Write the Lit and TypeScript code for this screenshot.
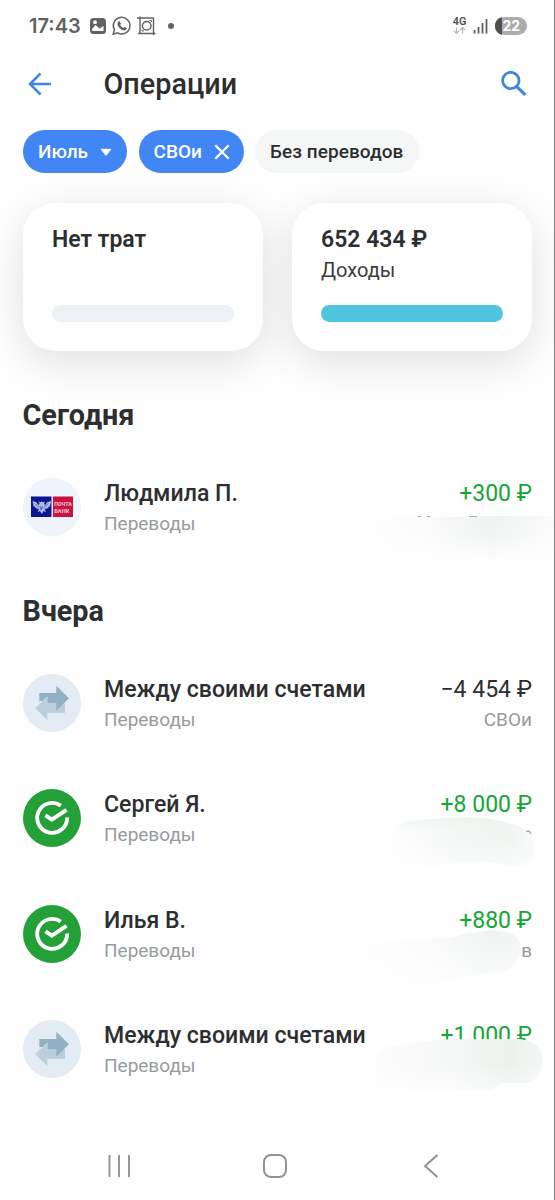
import { LitElement, html, svg, css, nothing } from "lit";
import { customElement, property } from "lit/decorators.js";

type Kind = "post" | "swap" | "sber";

interface Operation {
  kind: Kind;
  name: string;
  amount: string;
  income: boolean;
  account: string;
  smudge?: number;
}

const today: Operation[] = [
  { kind: "post", name: "Людмила П.", amount: "+300 ₽", income: true, account: "", smudge: 1 },
];

const yesterday: Operation[] = [
  { kind: "swap", name: "Между своими счетами", amount: "−4 454 ₽", income: false, account: "СВОи" },
  { kind: "sber", name: "Сергей Я.", amount: "+8 000 ₽", income: true, account: "", smudge: 2 },
  { kind: "sber", name: "Илья В.", amount: "+880 ₽", income: true, account: "в", smudge: 3 },
  { kind: "swap", name: "Между своими счетами", amount: "+1 000 ₽", income: true, account: "", smudge: 4 },
];

const icons = {
  post: svg`
    <circle cx="29" cy="29" r="29" fill="#eff3fc"/>
    <rect x="8" y="18.500" width="20.500" height="20.500" fill="#0d1590"/>
    <rect x="30" y="18.500" width="20" height="20.500" fill="#c8123f"/>
    <path d="M9.500 23l4 1.200 2 3 1-2-1-2 2 1 1.300-.8 1.300.8 2-1-1 2 1 2 2-3 4-1.200-1 5-3 2.500-2.500.500 1.500 3-2.500-1-1.800 3-1.800-3-2.500 1 1.500-3-2.500-.500-3-2.500z" fill="#a9bce6"/>
    <path d="M17 28l1.300 4 1.300-4M12 25.500l4 4M25 25.500l-4 4" fill="none" stroke="#0d1590" stroke-width=".5"/>
    <text x="31.300" y="27.800" font-size="6" font-weight="900" fill="#f7bccb" textLength="17.500" lengthAdjust="spacingAndGlyphs">ПОЧТА</text>
    <text x="31.300" y="34.500" font-size="6" font-weight="900" fill="#f7bccb" textLength="15" lengthAdjust="spacingAndGlyphs">БАНК</text>`,
  swap: svg`
    <circle cx="29" cy="29" r="29" fill="#e3ebf4"/>
    <path d="M23 29.300H42V38.800H23z" fill="#bccedb"/>
    <path d="M16.300 19H33.300V11.800L46 24.300 33.300 36.800V29.300H16.300z" fill="#92b0c4"/>
    <path d="M16.300 27V31H24.300V22.500L19.500 27z" fill="#e3ebf4"/>
    <path d="M12.300 34.300L24.300 22.500V45.800z" fill="#bccedb"/>`,
  sber: svg`
    <circle cx="29" cy="29" r="29" fill="#24a038"/>
    <path d="M37.800 16.600A15 15 0 1 0 44.200 28.500" fill="none" stroke="#fff" stroke-width="3.800"/>
    <path d="M22.500 26.300l6.300 4.300L43.500 20.900" fill="none" stroke="#fff" stroke-width="4"/>`,
};

/* Blurred strokes that hide account names; coordinates are relative to the row. */
const smudges: Record<number, unknown> = {
  1: svg`
    <defs>
      <linearGradient id="a" x1="0" x2="1"><stop offset="0" stop-color="#fefefe"/><stop offset=".35" stop-color="#f9faf9"/><stop offset=".65" stop-color="#eef2f0"/><stop offset="1" stop-color="#fafbfa"/></linearGradient>
      <linearGradient id="b" x1="0" x2="0" y1="0" y2="1"><stop offset="0" stop-color="#fefefe" stop-opacity="0"/><stop offset=".4" stop-color="#fefefe" stop-opacity=".2"/><stop offset="1" stop-color="#fefefe"/></linearGradient>
    </defs>
    <path d="M368 39H450L480 38H554V84H368z" fill="url(#a)"/>
    <path d="M366 37H554V84.500H366z" fill="url(#b)"/>
    <path d="M418 38.500h2.500M427 38.500h3M469 38.500h8" stroke="#a9adaf" stroke-width="1"/>`,
  2: svg`
    <defs>
      <linearGradient id="a" x1="0" x2="1"><stop offset="0" stop-color="#fdfdfd"/><stop offset=".5" stop-color="#f3f6f4"/><stop offset=".85" stop-color="#f1f5f2"/><stop offset="1" stop-color="#f8faf8"/></linearGradient>
      <linearGradient id="b" x1="0" x2="0" y1="0" y2="1"><stop offset="0" stop-color="#e2f1e5" stop-opacity=".5"/><stop offset=".4" stop-color="#fff" stop-opacity="0"/><stop offset="1" stop-color="#fff" stop-opacity=".6"/></linearGradient>
    </defs>
    <path d="M392 54Q390 34 412 32Q450 27 485 29Q518 34 530 44Q534 48 534 60Q533 74 520 78Q508 76 490 73Q470 71 450 74Q430 80 405 77Q392 73 392 54z" fill="url(#a)"/>
    <path d="M392 54Q390 34 412 32Q450 27 485 29Q518 34 530 44Q534 48 534 60Q533 74 520 78Q508 76 490 73Q470 71 450 74Q430 80 405 77Q392 73 392 54z" fill="url(#b)"/>
    <path d="M526 42.500q4-1.500 4.500 2.500" fill="none" stroke="#9da1a3" stroke-width="1.300"/>`,
  3: svg`
    <defs>
      <linearGradient id="a" x1="0" x2="1"><stop offset="0" stop-color="#fefefe"/><stop offset=".5" stop-color="#f9faf9"/><stop offset=".85" stop-color="#eff4f1"/><stop offset="1" stop-color="#f2f6f3"/></linearGradient>
      <linearGradient id="b" x1=".45" x2=".55" y1=".1" y2="1"><stop offset="0" stop-color="#fff" stop-opacity="0"/><stop offset="1" stop-color="#fff" stop-opacity=".7"/></linearGradient>
    </defs>
    <path d="M351 58Q352 40 375 37Q430 38 465 29Q495 22 507 27Q520 30 521 43Q520 59 507 65Q460 73 430 77Q390 84 365 79Q351 75 351 58z" fill="url(#a)"/>
    <path d="M351 58Q352 40 375 37Q430 38 465 29Q495 22 507 27Q520 30 521 43Q520 59 507 65Q460 73 430 77Q390 84 365 79Q351 75 351 58z" fill="url(#b)"/>`,
  4: svg`
    <defs>
      <linearGradient id="a" x1="0" x2="1"><stop offset="0" stop-color="#fbfbfb"/><stop offset=".5" stop-color="#f4f6f5"/><stop offset=".8" stop-color="#e9f1eb"/><stop offset="1" stop-color="#f3f6f4"/></linearGradient>
      <linearGradient id="b" x1="0" x2="0" y1="0" y2="1"><stop offset="0" stop-color="#fff" stop-opacity=".1"/><stop offset=".5" stop-color="#fff" stop-opacity=".1"/><stop offset="1" stop-color="#fff" stop-opacity=".6"/></linearGradient>
    </defs>
    <path d="M375 46Q375 28 392 26L440 19.500Q480 19 520 19Q543 22 543 42Q542 61 525 63H502Q494 71 480 70H388Q375 68 375 46z" fill="url(#a)"/>
    <path d="M375 46Q375 28 392 26L440 19.500Q480 19 520 19Q543 22 543 42Q542 61 525 63H502Q494 71 480 70H388Q375 68 375 46z" fill="url(#b)"/>`,
};

@customElement("operation-row")
class OperationRow extends LitElement {
  @property({ attribute: false }) op!: Operation;

  static styles = css`
    :host { display: block; position: relative; height: 115.400px; }
    .row { display: flex; padding: 0 23px; }
    .icon { width: 58px; height: 58px; flex: none; margin-right: 23px; }
    .text, .side { padding-top: 1px; white-space: nowrap; }
    .text { flex: 1; }
    .side { text-align: right; }
    .name { font-size: 23.100px; line-height: 30px; font-weight: 500; color: #2d2e30; }
    .amount { font-size: 23px; line-height: 30px; color: #2d2e30; }
    .income { color: #16a637; }
    .sub { font-size: 19px; line-height: 30px; color: #969b9f; }
    .smudge { position: absolute; left: 0; top: 0; width: 555px; height: 90px; }
  `;

  render() {
    const o = this.op;
    return html`
      <div class="row">
        <svg class="icon" viewBox="0 0 58 58">${icons[o.kind]}</svg>
        <div class="text">
          <div class="name">${o.name}</div>
          <div class="sub">Переводы</div>
        </div>
        <div class="side">
          <div class="amount ${o.income ? "income" : ""}">${o.amount}</div>
          <div class="sub">${o.account}</div>
        </div>
      </div>
      ${o.smudge ? html`<svg class="smudge" viewBox="0 0 555 90">${smudges[o.smudge]}</svg>` : nothing}
    `;
  }
}

@customElement("app-root")
class AppRoot extends LitElement {
  static styles = css`
    :host {
      display: block; box-sizing: border-box; width: 555px; height: 1200px; overflow: hidden;
      background: #fefefe; border-right: 1px solid #828282;
      font-family: Roboto, "Liberation Sans", sans-serif; color: #2d2e30;
    }
    .screen { display: flex; flex-direction: column; width: 555px; height: 1200px; }
    svg { display: block; flex: none; }
    .status { display: flex; height: 52px; align-items: center; padding: 0 27px 0 29px; color: #626262; }
    .time { font-family: Inter, Roboto, sans-serif; font-size: 20px; font-weight: 600; width: 58.500px; line-height: 52px; white-space: nowrap; }
    .grow { flex: 1; }
    .head { display: flex; height: 64px; align-items: center; padding: 0 28px 0 27px; }
    .title { flex: 1; margin: 0 0 0 51.500px; font-size: 28.800px; font-weight: 500; line-height: 64px; }
    .chips { display: flex; gap: 11.500px; padding: 14px 23px 0; }
    .chip { box-sizing: border-box; display: flex; align-items: center; height: 43px; border-radius: 22px; padding: 0 15px; font-size: 19px; font-weight: 500; white-space: nowrap; background: #f5f7f7; }
    .on { background: #4285f4; color: #fff; justify-content: space-between; }
    .month { width: 104px; }
    .tag { width: 105px; padding-right: 14px; }
    .plain { width: 164px; letter-spacing: 0.060px; }
    .cards { display: flex; gap: 29px; padding: 30px 23px 0; }
    .card { box-sizing: border-box; width: 240px; height: 148px; border-radius: 32px; background: #fff; padding: 22px 29px 29px; display: flex; flex-direction: column; box-shadow: 0 11px 44px rgba(0, 0, 0, 0.12); }
    .sum { font-size: 23px; line-height: 30px; font-weight: 600; white-space: nowrap; }
    .label { font-size: 20px; line-height: 30px; color: #3b3c3e; }
    .bar { height: 17.500px; border-radius: 9px; margin-top: auto; background: #edf1f3; }
    .full { background: #4fc4df; }
    .day { margin: 0; font-size: 28.800px; font-weight: 700; line-height: 40px; padding: 44px 22.500px 43px; }
    .second { padding: 55px 22.500px 43px; margin-top: -57.400px; }
    .nav { display: flex; justify-content: space-between; align-items: center; padding: 0 116px 0 107px; margin-top: 16.400px; height: 28px; }
    .home { margin-right: 5px; }
  `;

  render() {
    return html`
      <div class="screen">
        <div class="status">
          <span class="time">17:43</span>
          <svg width="90" height="22" viewBox="0 0 90 22">
            <rect x="2" y="3" width="16" height="16" rx="3.500" fill="#626262"/>
            <path d="M4 14l3.500-4 4 3.500 4-2.500v5h-11z" fill="#fff"/><circle cx="7" cy="7.200" r="1.900" fill="#fff"/>
            <path d="M25.200 19.200l1.200-4.500a8.300 8.300 0 1 1 3.200 3.200z" fill="none" stroke="#626262" stroke-width="1.500"/>
            <path d="M30.300 6.500l1.500-.3 1.200 2.700-.9 1.200q1.200 2.100 3.200 3l1.200-1.200 2.400 1.200q0 2-2.100 2.400-3.400 0-6-3.300-2.200-3-.5-5.700z" fill="#626262"/>
            <path d="M49 3h16.500M52 1.500V19M50 18.500h17.500M65.500 3v17" fill="none" stroke="#626262" stroke-width="1.400"/>
            <circle cx="58.700" cy="10.800" r="4.300" fill="none" stroke="#626262" stroke-width="1.500"/><path d="M61.500 5.500h2V7M54 14.500V16h2" fill="none" stroke="#626262"/>
            <circle cx="83" cy="11" r="3" fill="#626262"/>
          </svg>
          <span class="grow"></span>
          <svg width="76" height="22" viewBox="0 0 76 22">
            <text x=".8" y="10" font-size="10.500" font-weight="600" fill="#4d4d4d" textLength="13.500" lengthAdjust="spacingAndGlyphs">4G</text>
            <path d="M4.500 12.500v6M2 16l2.500 2.500L7 16M10.500 18.500v-6M8 15l2.500-2.500L13 15" fill="none" stroke="#b5b5b5" stroke-width="1.200"/>
            <path d="M22.500 15v3.500M26.500 12v6.500M30.500 8v10.500M34.500 4v14.500" stroke="#5f5f5f" stroke-width="1.800"/>
            <rect x="43" y="2" width="32" height="18" rx="9" fill="#adadad"/>
            <path d="M50 2.200A9 9 0 0 0 50 19.800z" fill="#4f4f4f"/>
            <text x="50.500" y="16" font-family="Inter, Roboto, sans-serif" font-size="14" font-weight="700" fill="#fff" textLength="17.500" lengthAdjust="spacingAndGlyphs">22</text>
          </svg>
        </div>
        <div class="head">
          <svg width="25" height="24" viewBox="0 0 25 24"><path d="M24 12H3M13.500 1.500L3 12 13.500 22.500" fill="none" stroke="#4285e8" stroke-width="2.500"/></svg>
          <h1 class="title">Операции</h1>
          <svg width="26" height="26" viewBox="0 0 26 26"><circle cx="9.800" cy="9.500" r="8.200" fill="none" stroke="#4285dc" stroke-width="2.800"/><path d="M15.500 15.300l8.800 8.500" stroke="#4285dc" stroke-width="3.200"/></svg>
        </div>
        <div class="chips">
          <div class="chip on month">Июль<svg width="12" height="10" viewBox="0 0 12 10"><path d="M1.200 2.300h9.600L6 8.500z" fill="#fff" stroke="#fff" stroke-linejoin="round"/></svg></div>
          <div class="chip on tag">СВОи<svg width="16" height="16" viewBox="0 0 16 16"><path d="M1.300 1.300l13.400 13.400M14.700 1.300L1.300 14.700" stroke="#fff" stroke-width="2.300"/></svg></div>
          <div class="chip plain">Без переводов</div>
        </div>
        <div class="cards">
          <div class="card"><div class="sum">Нет трат</div><div class="bar"></div></div>
          <div class="card"><div class="sum">652 434 ₽</div><div class="label">Доходы</div><div class="bar full"></div></div>
        </div>
        <h2 class="day">Сегодня</h2>
        ${today.map((o) => html`<operation-row .op=${o}></operation-row>`)}
        <h2 class="day second">Вчера</h2>
        ${yesterday.map((o) => html`<operation-row .op=${o}></operation-row>`)}
        <div class="nav">
          <svg width="24" height="24" viewBox="0 0 24 24"><path d="M2.500 1v22M12 1v22M22 1v22" stroke="#929292" stroke-width="1.900"/></svg>
          <svg class="home" width="26" height="26" viewBox="0 0 26 26"><rect x="2" y="2" width="22" height="22" rx="7" fill="none" stroke="#929292" stroke-width="2"/></svg>
          <svg width="16" height="26" viewBox="0 0 16 26"><path d="M14.500 2L2 13l12.500 11" fill="none" stroke="#929292" stroke-width="2"/></svg>
        </div>
      </div>
    `;
  }
}
